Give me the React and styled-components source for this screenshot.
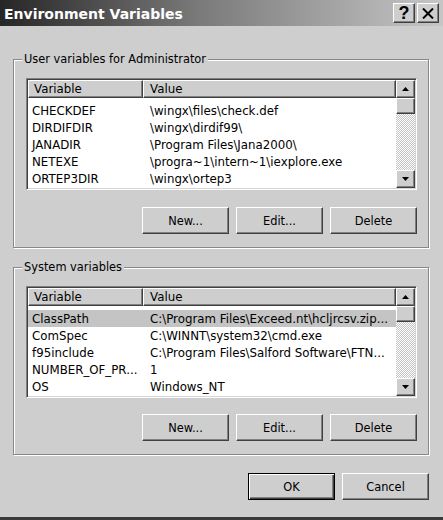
import React from 'react';
import styled, { createGlobalStyle, css } from 'styled-components';

const GlobalStyle = createGlobalStyle`
  html, body {
    margin: 0;
    padding: 0;
    background: #cecece;
  }
  * {
    box-sizing: border-box;
  }
`;

const raised = css`
  background: #cecece;
  border: 1px solid;
  border-color: #ffffff #404040 #404040 #ffffff;
  box-shadow: inset -1px -1px 0 #808080;
`;

const Window = styled.div`
  width: 443px;
  height: 520px;
  background: #cecece;
  display: flex;
  flex-direction: column;
  font-family: 'DejaVu Sans', 'Liberation Sans', sans-serif;
  font-size: 11.4px;
  color: #000;
  border-bottom: 3px solid #3a3a3a;
  overflow: hidden;
`;

const TitleBar = styled.div`
  height: 26px;
  flex: none;
  display: flex;
  align-items: center;
  justify-content: space-between;
  padding: 0 4px 0 4px;
  background: linear-gradient(to right, #262626 0%, #7a7a7a 45%, #c6c6c6 100%);
`;

const Title = styled.div`
  color: #fff;
  font-family: 'DejaVu Sans', 'Liberation Sans', sans-serif;
  font-weight: bold;
  font-size: 14px;
  padding-top: 1px;
`;

const CaptionButtons = styled.div`
  display: flex;
  gap: 2px;
`;

const CaptionButton = styled.div`
  ${raised};
  width: 22px;
  height: 20px;
  display: flex;
  align-items: center;
  justify-content: center;
  font-family: 'Liberation Sans', sans-serif;
  font-weight: bold;
  font-size: 18px;
  line-height: 1;
`;

const Body = styled.div`
  flex: 1;
  display: flex;
  flex-direction: column;
  padding: 33px 14px 0 13px;
`;

const GroupBox = styled.div`
  position: relative;
  border: 1px solid #888888;
  box-shadow: inset 1px 1px 0 #fff, 1px 1px 0 #fff;
  padding: 18px 11px 13px 12px;
  margin-top: ${(p) => p.$gap || 0}px;
`;

const GroupLabel = styled.span`
  position: absolute;
  top: -8px;
  left: 8px;
  padding: 0 2px;
  line-height: 14px;
  background: #cecece;
`;

const ListView = styled.div`
  height: 112px;
  display: grid;
  grid-template-columns: 1fr 19px;
  background: #fff;
  border: 1px solid;
  border-color: #808080 #ffffff #ffffff #808080;
  box-shadow: inset 1px 1px 0 #404040, inset -1px -1px 0 #d4d4d4;
  padding: 1px;
`;

const ListContent = styled.div`
  overflow: hidden;
  font-size: 11.8px;
`;

const Columns = css`
  display: grid;
  grid-template-columns: 115px 1fr;
`;

const Header = styled.div`
  ${Columns};
  height: 18px;
`;

const HeaderCell = styled.div`
  ${raised};
  display: flex;
  align-items: center;
  padding-left: ${(p) => p.$pad}px;
  white-space: nowrap;
`;

const Rows = styled.div`
  padding-top: 4px;
`;

const Row = styled.div`
  ${Columns};
  height: 17px;
  align-items: center;
  background: ${(p) => (p.$selected ? '#c4c4c4' : 'transparent')};
`;

const Cell = styled.div`
  padding-left: ${(p) => p.$pad}px;
  white-space: nowrap;
  overflow: hidden;
`;

const ScrollBar = styled.div`
  display: flex;
  flex-direction: column;
  background: repeating-conic-gradient(#c4c4c4 0 25%, #ffffff 0 50%) 0 0 / 2px 2px;
`;

const ScrollButton = styled.div`
  ${raised};
  height: ${(p) => p.$h}px;
  flex: none;
  display: flex;
  align-items: center;
  justify-content: center;
`;

const Track = styled.div`
  flex: 1;
`;

const ButtonRow = styled.div`
  display: flex;
  justify-content: flex-end;
  gap: 7px;
  margin-top: ${(p) => p.$top}px;
`;

const Button = styled.div`
  width: 87px;
  height: 27px;
  display: flex;
  align-items: center;
  justify-content: center;
  background: #cecece;
  ${(p) =>
    p.$default
      ? css`
          border: 1px solid #000;
          box-shadow: inset 1px 1px 0 #fff, inset -1px -1px 0 #404040,
            inset -2px -2px 0 #808080;
        `
      : css`
          border: 1px solid;
          border-color: #ffffff #404040 #404040 #ffffff;
          box-shadow: inset -1px -1px 0 #808080;
        `}
`;

function Arrow({ down }) {
  return (
    <svg width="7" height="4" viewBox="0 0 7 4">
      <polygon points={down ? '0,0 7,0 3.5,4' : '0,4 7,4 3.5,0'} fill="#000" />
    </svg>
  );
}

function CloseGlyph() {
  return (
    <svg width="12" height="11" viewBox="0 0 12 11">
      <path d="M1 0.5 L11 10.5 M11 0.5 L1 10.5" stroke="#000" strokeWidth="2" />
    </svg>
  );
}

function VarList({ rows, selected }) {
  return (
    <ListView>
      <ListContent>
        <Header>
          <HeaderCell $pad={5}>Variable</HeaderCell>
          <HeaderCell $pad={6}>Value</HeaderCell>
        </Header>
        <Rows>
          {rows.map(([name, value], i) => (
            <Row key={name} $selected={i === selected}>
              <Cell $pad={4}>{name}</Cell>
              <Cell $pad={7}>{value}</Cell>
            </Row>
          ))}
        </Rows>
      </ListContent>
      <ScrollBar>
        <ScrollButton $h={18}>
          <Arrow />
        </ScrollButton>
        <ScrollButton $h={16} />
        <Track />
        <ScrollButton $h={18}>
          <Arrow down />
        </ScrollButton>
      </ScrollBar>
    </ListView>
  );
}

const userVars = [
  ['CHECKDEF', '\\wingx\\files\\check.def'],
  ['DIRDIFDIR', '\\wingx\\dirdif99\\'],
  ['JANADIR', '\\Program Files\\Jana2000\\'],
  ['NETEXE', '\\progra~1\\intern~1\\iexplore.exe'],
  ['ORTEP3DIR', '\\wingx\\ortep3'],
  ['Path', 'C:\\bin;\\batch;C:\\Program Files\\Exceed.nt'],
];

const systemVars = [
  ['ClassPath', 'C:\\Program Files\\Exceed.nt\\hcljrcsv.zip...'],
  ['ComSpec', 'C:\\WINNT\\system32\\cmd.exe'],
  ['f95include', 'C:\\Program Files\\Salford Software\\FTN...'],
  ['NUMBER_OF_PR...', '1'],
  ['OS', 'Windows_NT'],
  ['Os2LibPath', 'C:\\WINNT\\system32\\os2\\dll;'],
];

export default function App() {
  return (
    <>
      <GlobalStyle />
      <Window>
        <TitleBar>
          <Title>Environment Variables</Title>
          <CaptionButtons>
            <CaptionButton>?</CaptionButton>
            <CaptionButton>
              <CloseGlyph />
            </CaptionButton>
          </CaptionButtons>
        </TitleBar>
        <Body>
          <GroupBox>
            <GroupLabel>User variables for Administrator</GroupLabel>
            <VarList rows={userVars} />
            <ButtonRow $top={17}>
              <Button>New...</Button>
              <Button>Edit...</Button>
              <Button>Delete</Button>
            </ButtonRow>
          </GroupBox>
          <GroupBox $gap={19}>
            <GroupLabel>System variables</GroupLabel>
            <VarList rows={systemVars} selected={0} />
            <ButtonRow $top={16}>
              <Button>New...</Button>
              <Button>Edit...</Button>
              <Button>Delete</Button>
            </ButtonRow>
          </GroupBox>
          <ButtonRow $top={18}>
            <Button $default>OK</Button>
            <Button>Cancel</Button>
          </ButtonRow>
        </Body>
      </Window>
    </>
  );
}
